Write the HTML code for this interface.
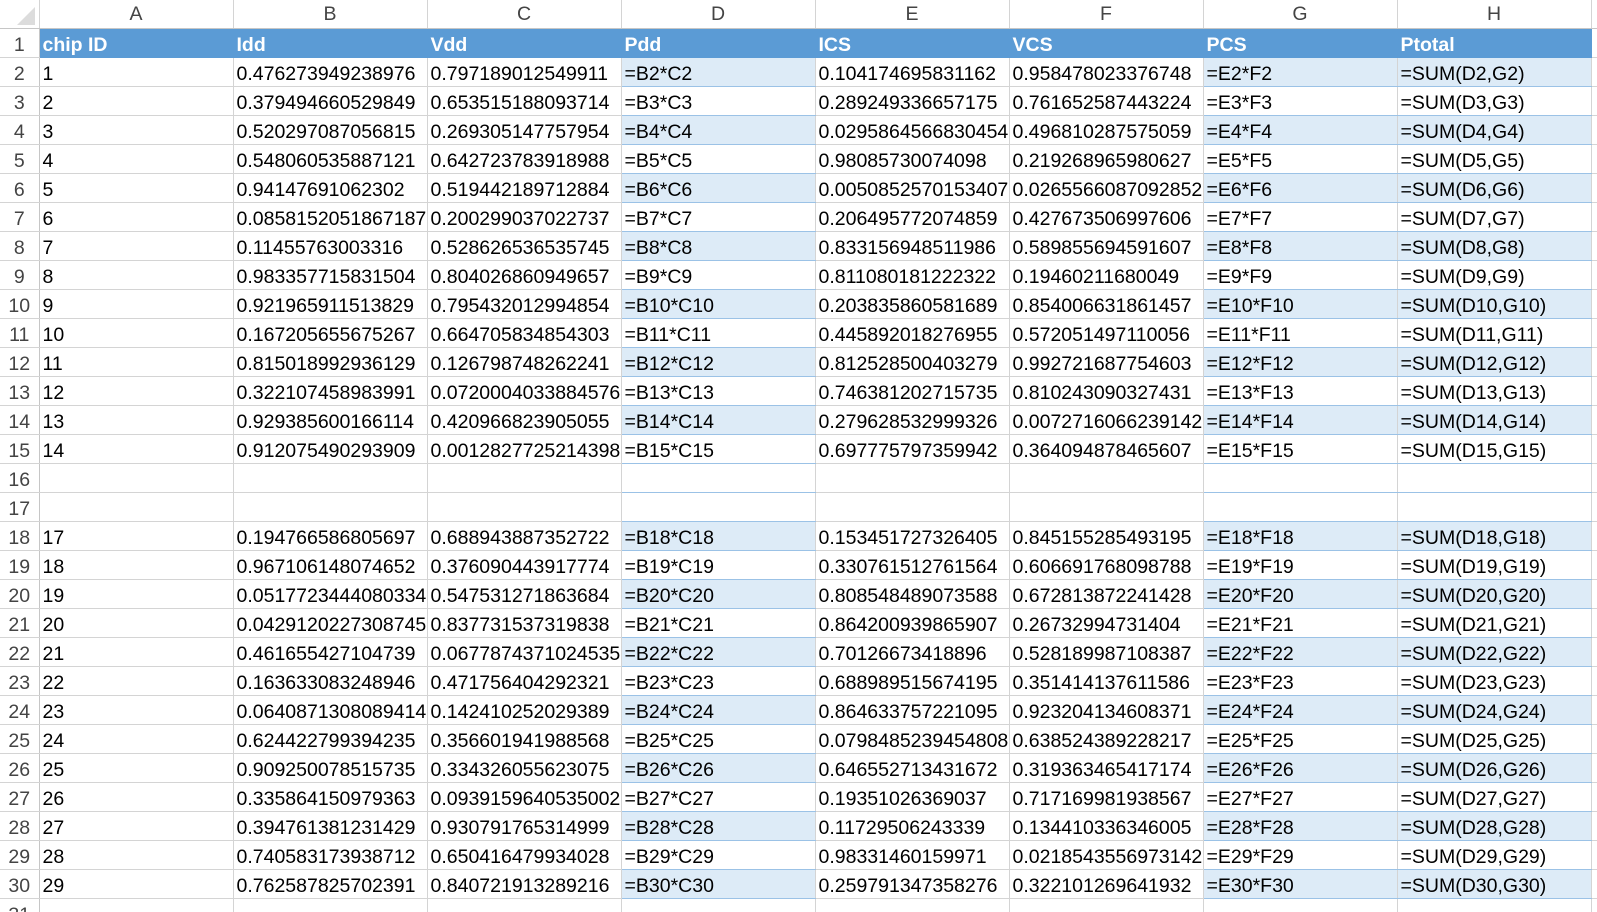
<!DOCTYPE html>
<html><head><meta charset="utf-8"><style>
html,body{margin:0;padding:0;background:#fff;width:1597px;height:912px;overflow:hidden}
table{border-collapse:collapse;table-layout:fixed;width:1597px;font-family:"Liberation Sans",Arial,sans-serif;font-size:19.5px;color:#000}
td{height:28px;padding:0 0 0 3px;border-right:1px solid #d4d4d4;border-bottom:1px solid #d4d4d4;white-space:nowrap;overflow:hidden;line-height:28px;vertical-align:bottom}
td span{position:relative;top:2px}
tr.ch td{height:28px;text-align:center;color:#444;padding:0;border-bottom:1px solid #c6c6c6;border-right:1px solid #d4d4d4}
td.rh{text-align:center;color:#444;padding:0;border-right:1px solid #c6c6c6}
tr.h td.c{background:#5b9bd5;color:#fff;font-weight:bold;border-right:1px solid #5b9bd5;border-bottom:1px solid #5b9bd5}
td.t{border-bottom:1px solid #9bc2e6}
tr.b td.t{background:#ddebf7}
</style></head><body>
<table>
<colgroup><col style="width:39px"><col style="width:194px"><col style="width:194px"><col style="width:194px"><col style="width:194px"><col style="width:194px"><col style="width:194px"><col style="width:194px"><col style="width:194px"><col style="width:6px"></colgroup>
<tr class="ch"><td style="background:#fff;position:relative"><svg width="39" height="29" style="position:absolute;left:0;top:0"><polygon points="35,7 35,25 17,25" fill="#dcdcdc"/></svg></td><td>A</td><td>B</td><td>C</td><td>D</td><td>E</td><td>F</td><td>G</td><td>H</td><td style="border-right:none"></td></tr>
<tr class="h"><td class="rh"><span>1</span></td><td class="c"><span>chip ID</span></td><td class="c"><span>Idd</span></td><td class="c"><span>Vdd</span></td><td class="c"><span>Pdd</span></td><td class="c"><span>ICS</span></td><td class="c"><span>VCS</span></td><td class="c"><span>PCS</span></td><td class="c"><span>Ptotal</span></td><td style="border-right:none"></td></tr>
<tr class="b"><td class="rh"><span>2</span></td><td><span>1</span></td><td><span>0.476273949238976</span></td><td><span>0.797189012549911</span></td><td class="t"><span>=B2*C2</span></td><td><span>0.104174695831162</span></td><td><span>0.958478023376748</span></td><td class="t"><span>=E2*F2</span></td><td class="t"><span>=SUM(D2,G2)</span></td><td style="border-right:none"></td></tr>
<tr><td class="rh"><span>3</span></td><td><span>2</span></td><td><span>0.379494660529849</span></td><td><span>0.653515188093714</span></td><td class="t"><span>=B3*C3</span></td><td><span>0.289249336657175</span></td><td><span>0.761652587443224</span></td><td class="t"><span>=E3*F3</span></td><td class="t"><span>=SUM(D3,G3)</span></td><td style="border-right:none"></td></tr>
<tr class="b"><td class="rh"><span>4</span></td><td><span>3</span></td><td><span>0.520297087056815</span></td><td><span>0.269305147757954</span></td><td class="t"><span>=B4*C4</span></td><td><span>0.0295864566830454</span></td><td><span>0.496810287575059</span></td><td class="t"><span>=E4*F4</span></td><td class="t"><span>=SUM(D4,G4)</span></td><td style="border-right:none"></td></tr>
<tr><td class="rh"><span>5</span></td><td><span>4</span></td><td><span>0.548060535887121</span></td><td><span>0.642723783918988</span></td><td class="t"><span>=B5*C5</span></td><td><span>0.98085730074098</span></td><td><span>0.219268965980627</span></td><td class="t"><span>=E5*F5</span></td><td class="t"><span>=SUM(D5,G5)</span></td><td style="border-right:none"></td></tr>
<tr class="b"><td class="rh"><span>6</span></td><td><span>5</span></td><td><span>0.94147691062302</span></td><td><span>0.519442189712884</span></td><td class="t"><span>=B6*C6</span></td><td><span>0.00508525701534077</span></td><td><span>0.0265566087092852</span></td><td class="t"><span>=E6*F6</span></td><td class="t"><span>=SUM(D6,G6)</span></td><td style="border-right:none"></td></tr>
<tr><td class="rh"><span>7</span></td><td><span>6</span></td><td><span>0.0858152051867187</span></td><td><span>0.200299037022737</span></td><td class="t"><span>=B7*C7</span></td><td><span>0.206495772074859</span></td><td><span>0.427673506997606</span></td><td class="t"><span>=E7*F7</span></td><td class="t"><span>=SUM(D7,G7)</span></td><td style="border-right:none"></td></tr>
<tr class="b"><td class="rh"><span>8</span></td><td><span>7</span></td><td><span>0.11455763003316</span></td><td><span>0.528626536535745</span></td><td class="t"><span>=B8*C8</span></td><td><span>0.833156948511986</span></td><td><span>0.589855694591607</span></td><td class="t"><span>=E8*F8</span></td><td class="t"><span>=SUM(D8,G8)</span></td><td style="border-right:none"></td></tr>
<tr><td class="rh"><span>9</span></td><td><span>8</span></td><td><span>0.983357715831504</span></td><td><span>0.804026860949657</span></td><td class="t"><span>=B9*C9</span></td><td><span>0.811080181222322</span></td><td><span>0.19460211680049</span></td><td class="t"><span>=E9*F9</span></td><td class="t"><span>=SUM(D9,G9)</span></td><td style="border-right:none"></td></tr>
<tr class="b"><td class="rh"><span>10</span></td><td><span>9</span></td><td><span>0.921965911513829</span></td><td><span>0.795432012994854</span></td><td class="t"><span>=B10*C10</span></td><td><span>0.203835860581689</span></td><td><span>0.854006631861457</span></td><td class="t"><span>=E10*F10</span></td><td class="t"><span>=SUM(D10,G10)</span></td><td style="border-right:none"></td></tr>
<tr><td class="rh"><span>11</span></td><td><span>10</span></td><td><span>0.167205655675267</span></td><td><span>0.664705834854303</span></td><td class="t"><span>=B11*C11</span></td><td><span>0.445892018276955</span></td><td><span>0.572051497110056</span></td><td class="t"><span>=E11*F11</span></td><td class="t"><span>=SUM(D11,G11)</span></td><td style="border-right:none"></td></tr>
<tr class="b"><td class="rh"><span>12</span></td><td><span>11</span></td><td><span>0.815018992936129</span></td><td><span>0.126798748262241</span></td><td class="t"><span>=B12*C12</span></td><td><span>0.812528500403279</span></td><td><span>0.992721687754603</span></td><td class="t"><span>=E12*F12</span></td><td class="t"><span>=SUM(D12,G12)</span></td><td style="border-right:none"></td></tr>
<tr><td class="rh"><span>13</span></td><td><span>12</span></td><td><span>0.322107458983991</span></td><td><span>0.0720004033884576</span></td><td class="t"><span>=B13*C13</span></td><td><span>0.746381202715735</span></td><td><span>0.810243090327431</span></td><td class="t"><span>=E13*F13</span></td><td class="t"><span>=SUM(D13,G13)</span></td><td style="border-right:none"></td></tr>
<tr class="b"><td class="rh"><span>14</span></td><td><span>13</span></td><td><span>0.929385600166114</span></td><td><span>0.420966823905055</span></td><td class="t"><span>=B14*C14</span></td><td><span>0.279628532999326</span></td><td><span>0.00727160662391422</span></td><td class="t"><span>=E14*F14</span></td><td class="t"><span>=SUM(D14,G14)</span></td><td style="border-right:none"></td></tr>
<tr><td class="rh"><span>15</span></td><td><span>14</span></td><td><span>0.912075490293909</span></td><td><span>0.00128277252143988</span></td><td class="t"><span>=B15*C15</span></td><td><span>0.697775797359942</span></td><td><span>0.364094878465607</span></td><td class="t"><span>=E15*F15</span></td><td class="t"><span>=SUM(D15,G15)</span></td><td style="border-right:none"></td></tr>
<tr><td class="rh"><span>16</span></td><td></td><td></td><td></td><td class="t"></td><td></td><td></td><td class="t"></td><td class="t"></td><td style="border-right:none"></td></tr>
<tr><td class="rh"><span>17</span></td><td></td><td></td><td></td><td class="t"></td><td></td><td></td><td class="t"></td><td class="t"></td><td style="border-right:none"></td></tr>
<tr class="b"><td class="rh"><span>18</span></td><td><span>17</span></td><td><span>0.194766586805697</span></td><td><span>0.688943887352722</span></td><td class="t"><span>=B18*C18</span></td><td><span>0.153451727326405</span></td><td><span>0.845155285493195</span></td><td class="t"><span>=E18*F18</span></td><td class="t"><span>=SUM(D18,G18)</span></td><td style="border-right:none"></td></tr>
<tr><td class="rh"><span>19</span></td><td><span>18</span></td><td><span>0.967106148074652</span></td><td><span>0.376090443917774</span></td><td class="t"><span>=B19*C19</span></td><td><span>0.330761512761564</span></td><td><span>0.606691768098788</span></td><td class="t"><span>=E19*F19</span></td><td class="t"><span>=SUM(D19,G19)</span></td><td style="border-right:none"></td></tr>
<tr class="b"><td class="rh"><span>20</span></td><td><span>19</span></td><td><span>0.0517723444080334</span></td><td><span>0.547531271863684</span></td><td class="t"><span>=B20*C20</span></td><td><span>0.808548489073588</span></td><td><span>0.672813872241428</span></td><td class="t"><span>=E20*F20</span></td><td class="t"><span>=SUM(D20,G20)</span></td><td style="border-right:none"></td></tr>
<tr><td class="rh"><span>21</span></td><td><span>20</span></td><td><span>0.0429120227308745</span></td><td><span>0.837731537319838</span></td><td class="t"><span>=B21*C21</span></td><td><span>0.864200939865907</span></td><td><span>0.26732994731404</span></td><td class="t"><span>=E21*F21</span></td><td class="t"><span>=SUM(D21,G21)</span></td><td style="border-right:none"></td></tr>
<tr class="b"><td class="rh"><span>22</span></td><td><span>21</span></td><td><span>0.461655427104739</span></td><td><span>0.0677874371024535</span></td><td class="t"><span>=B22*C22</span></td><td><span>0.70126673418896</span></td><td><span>0.528189987108387</span></td><td class="t"><span>=E22*F22</span></td><td class="t"><span>=SUM(D22,G22)</span></td><td style="border-right:none"></td></tr>
<tr><td class="rh"><span>23</span></td><td><span>22</span></td><td><span>0.163633083248946</span></td><td><span>0.471756404292321</span></td><td class="t"><span>=B23*C23</span></td><td><span>0.688989515674195</span></td><td><span>0.351414137611586</span></td><td class="t"><span>=E23*F23</span></td><td class="t"><span>=SUM(D23,G23)</span></td><td style="border-right:none"></td></tr>
<tr class="b"><td class="rh"><span>24</span></td><td><span>23</span></td><td><span>0.0640871308089414</span></td><td><span>0.142410252029389</span></td><td class="t"><span>=B24*C24</span></td><td><span>0.864633757221095</span></td><td><span>0.923204134608371</span></td><td class="t"><span>=E24*F24</span></td><td class="t"><span>=SUM(D24,G24)</span></td><td style="border-right:none"></td></tr>
<tr><td class="rh"><span>25</span></td><td><span>24</span></td><td><span>0.624422799394235</span></td><td><span>0.356601941988568</span></td><td class="t"><span>=B25*C25</span></td><td><span>0.0798485239454808</span></td><td><span>0.638524389228217</span></td><td class="t"><span>=E25*F25</span></td><td class="t"><span>=SUM(D25,G25)</span></td><td style="border-right:none"></td></tr>
<tr class="b"><td class="rh"><span>26</span></td><td><span>25</span></td><td><span>0.909250078515735</span></td><td><span>0.334326055623075</span></td><td class="t"><span>=B26*C26</span></td><td><span>0.646552713431672</span></td><td><span>0.319363465417174</span></td><td class="t"><span>=E26*F26</span></td><td class="t"><span>=SUM(D26,G26)</span></td><td style="border-right:none"></td></tr>
<tr><td class="rh"><span>27</span></td><td><span>26</span></td><td><span>0.335864150979363</span></td><td><span>0.0939159640535002</span></td><td class="t"><span>=B27*C27</span></td><td><span>0.19351026369037</span></td><td><span>0.717169981938567</span></td><td class="t"><span>=E27*F27</span></td><td class="t"><span>=SUM(D27,G27)</span></td><td style="border-right:none"></td></tr>
<tr class="b"><td class="rh"><span>28</span></td><td><span>27</span></td><td><span>0.394761381231429</span></td><td><span>0.930791765314999</span></td><td class="t"><span>=B28*C28</span></td><td><span>0.11729506243339</span></td><td><span>0.134410336346005</span></td><td class="t"><span>=E28*F28</span></td><td class="t"><span>=SUM(D28,G28)</span></td><td style="border-right:none"></td></tr>
<tr><td class="rh"><span>29</span></td><td><span>28</span></td><td><span>0.740583173938712</span></td><td><span>0.650416479934028</span></td><td class="t"><span>=B29*C29</span></td><td><span>0.98331460159971</span></td><td><span>0.0218543556973142</span></td><td class="t"><span>=E29*F29</span></td><td class="t"><span>=SUM(D29,G29)</span></td><td style="border-right:none"></td></tr>
<tr class="b"><td class="rh"><span>30</span></td><td><span>29</span></td><td><span>0.762587825702391</span></td><td><span>0.840721913289216</span></td><td class="t"><span>=B30*C30</span></td><td><span>0.259791347358276</span></td><td><span>0.322101269641932</span></td><td class="t"><span>=E30*F30</span></td><td class="t"><span>=SUM(D30,G30)</span></td><td style="border-right:none"></td></tr>
<tr><td class="rh"><span>31</span></td><td></td><td></td><td></td><td></td><td></td><td></td><td></td><td></td><td style="border-right:none"></td></tr>
</table>
</body></html>
